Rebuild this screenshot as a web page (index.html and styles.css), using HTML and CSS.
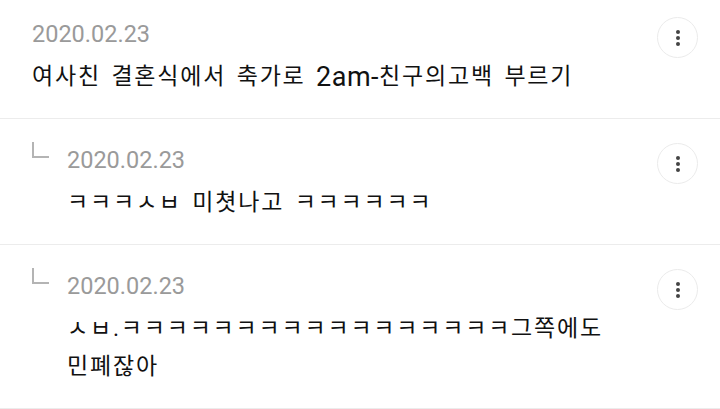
FILE: index.html
```html
<!DOCTYPE html>
<html lang="ko">
<head>
    <meta charset="UTF-8">
    <meta name="viewport" content="width=device-width, initial-scale=1.0">
    <title>댓글</title>
    <link rel="stylesheet" href="styles.css">
</head>
<body>
    <div class="comments">
        <div class="comment first">
            <div class="body">
                <div class="date">2020.02.23</div>
                <div class="text">여사친 결혼식에서 축가로 <span class="latin">2am-</span>친구의고백 부르기</div>
            </div>
            <button class="more"><span></span><span></span><span></span></button>
        </div>

        <div class="comment reply">
            <div class="corner"></div>
            <div class="body">
                <div class="date">2020.02.23</div>
                <div class="text">ㅋㅋㅋㅅㅂ 미쳣나고 ㅋㅋㅋㅋㅋㅋ</div>
            </div>
            <button class="more"><span></span><span></span><span></span></button>
        </div>

        <div class="comment reply">
            <div class="corner"></div>
            <div class="body">
                <div class="date">2020.02.23</div>
                <div class="text">ㅅㅂ.ㅋㅋㅋㅋㅋㅋㅋㅋㅋㅋㅋㅋㅋㅋㅋㅋㅋ그쪽에도<br>민폐잖아</div>
            </div>
            <button class="more"><span></span><span></span><span></span></button>
        </div>
    </div>
</body>
</html>
```

FILE: styles.css
```css
body {
    margin: 0;
    background: #fff;
    font-family: Roboto, "Noto Sans CJK KR", sans-serif;
}
.comment {
    display: flex;
    align-items: flex-start;
    padding: 26px 22px 22px 32px;
    border-bottom: 1px solid #ececec;
}
.comment.first {
    padding-top: 19px;
}
.body {
    flex: 1;
}
.date {
    font-size: 23.5px;
    line-height: 30px;
    color: #9a9a9a;
}
.text {
    margin-top: 9px;
    font-family: Roboto, "Noto Sans CJK KR", sans-serif;
    font-size: 23px;
    line-height: 38px;
    letter-spacing: 1.8px;
    word-spacing: 3px;
    color: #111;
}
.text .latin {
    font-size: 27px;
    letter-spacing: 0.5px;
    vertical-align: top;
    line-height: 38px;
}
.corner {
    width: 15px;
    height: 14px;
    margin-top: -3px;
    margin-right: 18px;
    border-left: 2px solid #b4b4b4;
    border-bottom: 2px solid #b4b4b4;
}
.more {
    width: 41px;
    height: 41px;
    margin-top: -2px;
    padding: 0;
    border: 1px solid #ebebeb;
    border-radius: 50%;
    background: #fff;
    display: flex;
    flex-direction: column;
    align-items: center;
    justify-content: center;
    gap: 2px;
}
.more span {
    width: 4px;
    height: 4px;
    border-radius: 50%;
    background: #444;
}
```
